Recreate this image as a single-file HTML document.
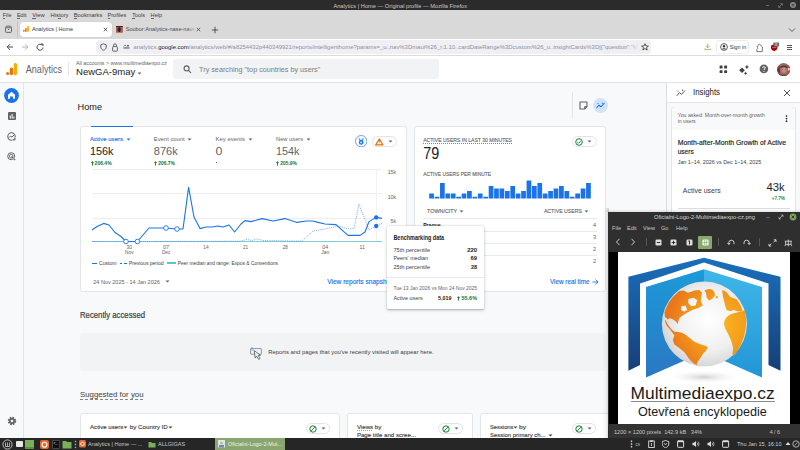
<!DOCTYPE html>
<html><head><meta charset="utf-8"><style>
*{margin:0;padding:0;box-sizing:border-box}
html,body{width:800px;height:450px;overflow:hidden;background:#f8f9fa;font-family:"Liberation Sans",sans-serif}
.t{position:absolute;white-space:nowrap;line-height:1}
text{font-family:"Liberation Sans",sans-serif;white-space:pre}
.r{position:absolute}
</style></head><body>
<div class='r' style='left:0px;top:0px;width:800px;height:9.5px;background:#2b2b2b'></div>
<svg class='r' style='left:0;top:0;overflow:visible' width='1' height='1'><text x='400.2' y='8' font-size='5.7' fill='#c9c9c9' font-weight='400' text-anchor='middle' textLength='133.6' lengthAdjust='spacingAndGlyphs' style=''>Analytics | Home — Original profile — Mozilla Firefox</text></svg>
<div class='r' style='left:766.3px;top:4.8px;width:3px;height:0.7px;background:#6a6a6a'></div>
<svg class='r' style='left:777px;top:2px;' width='7' height='7' viewBox='0 0 7 7'><path d='M1.8 5.2 L5.2 1.8 M3.4 1.6 H5.4 V3.6 M1.6 3.4 V5.4 H3.6' stroke='#7a7a7a' stroke-width='0.8' fill='none'/></svg>
<svg class='r' style='left:789px;top:1px;' width='8' height='8' viewBox='0 0 8 8'><circle cx='4' cy='4' r='3' fill='#8a8a8a'/><circle cx='4' cy='4' r='1.5' fill='#555'/></svg>
<div class='r' style='left:0px;top:9.5px;width:800px;height:29px;background:#d9d9d9'></div>
<svg class='r' style='left:0;top:0;overflow:visible' width='1' height='1'><text x='2.75' y='17' font-size='5.8' fill='#3b3b3b' font-weight='400' text-anchor='start' textLength='8.85' lengthAdjust='spacingAndGlyphs' style=''>File</text></svg>
<svg class='r' style='left:0;top:0;overflow:visible' width='1' height='1'><text x='16.9' y='17' font-size='5.8' fill='#3b3b3b' font-weight='400' text-anchor='start' textLength='9.6' lengthAdjust='spacingAndGlyphs' style=''>Edit</text></svg>
<svg class='r' style='left:0;top:0;overflow:visible' width='1' height='1'><text x='32.25' y='17' font-size='5.8' fill='#3b3b3b' font-weight='400' text-anchor='start' textLength='12.5' lengthAdjust='spacingAndGlyphs' style=''>View</text></svg>
<svg class='r' style='left:0;top:0;overflow:visible' width='1' height='1'><text x='50.6' y='17' font-size='5.8' fill='#3b3b3b' font-weight='400' text-anchor='start' textLength='17.9' lengthAdjust='spacingAndGlyphs' style=''>History</text></svg>
<svg class='r' style='left:0;top:0;overflow:visible' width='1' height='1'><text x='73.75' y='17' font-size='5.8' fill='#3b3b3b' font-weight='400' text-anchor='start' textLength='28.5' lengthAdjust='spacingAndGlyphs' style=''>Bookmarks</text></svg>
<svg class='r' style='left:0;top:0;overflow:visible' width='1' height='1'><text x='107.5' y='17' font-size='5.8' fill='#3b3b3b' font-weight='400' text-anchor='start' textLength='18.75' lengthAdjust='spacingAndGlyphs' style=''>Profiles</text></svg>
<svg class='r' style='left:0;top:0;overflow:visible' width='1' height='1'><text x='132.25' y='17' font-size='5.8' fill='#3b3b3b' font-weight='400' text-anchor='start' textLength='12.75' lengthAdjust='spacingAndGlyphs' style=''>Tools</text></svg>
<svg class='r' style='left:0;top:0;overflow:visible' width='1' height='1'><text x='150.6' y='17' font-size='5.8' fill='#3b3b3b' font-weight='400' text-anchor='start' textLength='11.5' lengthAdjust='spacingAndGlyphs' style=''>Help</text></svg>
<div class='r' style='left:2.9px;top:18px;width:2.6px;height:0.5px;background:#666'></div>
<div class='r' style='left:17px;top:18px;width:2.6px;height:0.5px;background:#666'></div>
<div class='r' style='left:32.4px;top:18px;width:3.3px;height:0.5px;background:#666'></div>
<div class='r' style='left:58.3px;top:18px;width:2.3px;height:0.5px;background:#666'></div>
<div class='r' style='left:73.9px;top:18px;width:3.2px;height:0.5px;background:#666'></div>
<div class='r' style='left:107.7px;top:18px;width:2.8px;height:0.5px;background:#666'></div>
<div class='r' style='left:132.4px;top:18px;width:2.8px;height:0.5px;background:#666'></div>
<div class='r' style='left:150.8px;top:18px;width:3.4px;height:0.5px;background:#666'></div>
<svg class='r' style='left:4px;top:25px;' width='9' height='9' viewBox='0 0 9 9'><path d='M1.5 2.8 C1.5 1.6 2 1.2 3 1.2 H6 C7 1.2 7.5 1.6 7.5 2.8' fill='none' stroke='#5a5a5a' stroke-width='0.9'/><rect x='1.5' y='2.8' width='6' height='4.6' rx='0.9' fill='none' stroke='#5a5a5a' stroke-width='0.9'/><path d='M4 4.5 H5' stroke='#5a5a5a' stroke-width='0.8'/></svg>
<div class='r' style='left:17px;top:20.5px;width:0.6px;height:17.5px;background:#c6c6c6'></div>
<div class='r' style='left:20px;top:22px;width:91.5px;height:14.5px;background:#ffffff;border-radius:3.5px;box-shadow:0 0 1px rgba(0,0,0,.2)'></div>
<svg class='r' style='left:23.2px;top:26px;' width='6' height='6' viewBox='0 0 6 6'><rect x='0.1' y='3.8' width='1.6' height='2.1' rx='.8' fill='#e8710a'/><rect x='2.1' y='2' width='1.6' height='3.9' rx='.7' fill='#e8710a'/><rect x='4.2' y='0' width='1.7' height='5.9' rx='.8' fill='#f9ab00'/></svg>
<svg class='r' style='left:0;top:0;overflow:visible' width='1' height='1'><text x='31.9' y='31' font-size='5.8' fill='#333' font-weight='400' text-anchor='start' textLength='41.2' lengthAdjust='spacingAndGlyphs' style=''>Analytics | Home</text></svg>
<svg class='r' style='left:102.5px;top:26.5px;' width='5' height='5' viewBox='0 0 5 5'><path d='M0.8 0.8 L4.2 4.2 M4.2 0.8 L0.8 4.2' stroke='#333' stroke-width='0.8'/></svg>
<svg class='r' style='left:116.4px;top:25.9px;' width='6.8' height='6.8' viewBox='0 0 6.8 6.8'><rect x='0' y='0' width='6.8' height='6.8' rx='0.6' fill='#c8581c'/><rect x='0' y='0' width='6.8' height='0.9' fill='#3a1a0a'/><ellipse cx='3.2' cy='3.6' rx='1.9' ry='2.3' fill='#1a3c9a'/><path d='M3.2 1.6 V5.8' stroke='#0a0a14' stroke-width='0.9'/></svg>
<svg class='r' style='left:0;top:0;overflow:visible' width='1' height='1'><text x='125.7' y='31' font-size='5.8' fill='#4a4a4a' font-weight='400' text-anchor='start' textLength='71' lengthAdjust='spacingAndGlyphs' style=''>Soubor:Analytics-nase-navs:</text></svg>
<div class='r' style='left:186px;top:21px;width:11px;height:16px;background:linear-gradient(90deg,rgba(217,217,217,0),#d9d9d9)'></div>
<svg class='r' style='left:196.3px;top:26.5px;' width='5' height='5' viewBox='0 0 5 5'><path d='M0.8 0.8 L4.2 4.2 M4.2 0.8 L0.8 4.2' stroke='#444' stroke-width='0.8'/></svg>
<svg class='r' style='left:210.5px;top:25.5px;' width='8' height='8' viewBox='0 0 8 8'><path d='M4 0.8 V7.2 M0.8 4 H7.2' stroke='#333' stroke-width='0.8'/></svg>
<svg class='r' style='left:788px;top:26.5px;' width='8' height='6' viewBox='0 0 8 6'><path d='M1 1.5 L4 4.5 L7 1.5' stroke='#444' stroke-width='0.8' fill='none'/></svg>
<div class='r' style='left:0px;top:38.5px;width:800px;height:17px;background:#ffffff'></div>
<div class='r' style='left:0px;top:55px;width:800px;height:0.8px;background:#dcdcdc'></div>
<svg class='r' style='left:6px;top:43px;' width='8' height='8' viewBox='0 0 8 8'><path d='M7 4 H1.3 M4 1.2 L1.2 4 L4 6.8' stroke='#333' stroke-width='0.9' fill='none'/></svg>
<svg class='r' style='left:21px;top:43px;' width='8' height='8' viewBox='0 0 8 8'><path d='M1 4 H6.7 M4 1.2 L6.8 4 L4 6.8' stroke='#aaa' stroke-width='0.9' fill='none'/></svg>
<svg class='r' style='left:36px;top:43px;' width='8' height='8' viewBox='0 0 8 8'><path d='M6.3 2.3 A3 3 0 1 0 7 4.5' stroke='#333' stroke-width='0.9' fill='none'/><path d='M5 1 L7 1 L7 3' stroke='#333' stroke-width='0.9' fill='none'/></svg>
<div class='r' style='left:96px;top:40.3px;width:555px;height:13.3px;background:#f0f0f4;border-radius:4px'></div>
<svg class='r' style='left:99.5px;top:43px;' width='7' height='8' viewBox='0 0 7 8'><path d='M3.5 0.8 L6.2 1.8 V4 C6.2 5.8 4.8 6.8 3.5 7.3 C2.2 6.8 0.8 5.8 0.8 4 V1.8 Z' stroke='#444' stroke-width='0.8' fill='none'/></svg>
<svg class='r' style='left:111.5px;top:42.5px;' width='6' height='9' viewBox='0 0 6 9'><rect x='0.6' y='3.6' width='4.8' height='4.6' rx='0.8' stroke='#444' stroke-width='0.8' fill='none'/><path d='M1.6 3.6 V2.2 A1.4 1.4 0 0 1 4.4 2.2 V3.6' stroke='#444' stroke-width='0.8' fill='none'/></svg>
<svg class='r' style='left:122.5px;top:44px;' width='7' height='6' viewBox='0 0 7 6'><rect x='0.5' y='3.4' width='6' height='1.1' fill='#555'/><path d='M0.6 2.4 L2.2 1 L3.2 2.4' stroke='#555' stroke-width='0.7' fill='none'/><circle cx='5' cy='1.7' r='0.9' fill='#555'/></svg>
<svg class='r' style='left:96px;top:38px' width='543' height='17'><text x='37.5' y='11' font-size='5.93' fill='#8f8f9d'>analytics.<tspan fill='#15141a'>google.com</tspan>/analytics/web/#/a8254432p440349921/reports/intelligenthome?params=_u..nav%3Dmaui%26_r.1.10..cardDateRange%3Dcustom%26_u..insightCards%3D[{&quot;question&quot;:&quot;M</text></svg>
<div class='r' style='left:627px;top:41px;width:13px;height:12px;background:linear-gradient(90deg,rgba(240,240,244,0),#f0f0f4)'></div>
<svg class='r' style='left:641px;top:43px;' width='8' height='8' viewBox='0 0 8 8'><path d='M4 0.7 L5 3 L7.4 3.1 L5.5 4.6 L6.2 7 L4 5.6 L1.8 7 L2.5 4.6 L0.6 3.1 L3 3 Z' stroke='#333' stroke-width='0.8' fill='none' stroke-linejoin='round'/></svg>
<svg class='r' style='left:704px;top:43px;' width='8' height='8' viewBox='0 0 8 8'><path d='M3.8 0.6 V4.6 M1.9 2.8 L3.8 4.7 L5.7 2.8' stroke='#7fae5a' stroke-width='0.8' fill='none'/><path d='M0.9 5.4 V6.6 H6.7 V5.4' stroke='#7fae5a' stroke-width='0.75' fill='none'/></svg>
<div class='r' style='left:716.3px;top:40.3px;width:33px;height:13.3px;background:#fff;border:0.6px solid #ededed;border-radius:3px'></div>
<svg class='r' style='left:719.5px;top:43px;' width='8' height='8' viewBox='0 0 8 8'><circle cx='4' cy='4' r='3.4' stroke='#333' stroke-width='0.8' fill='none'/><circle cx='4' cy='3.2' r='1.2' fill='#333'/><path d='M1.8 6.3 C2.5 4.8 5.5 4.8 6.2 6.3' fill='#333'/></svg>
<svg class='r' style='left:0;top:0;overflow:visible' width='1' height='1'><text x='729.8' y='49' font-size='5.8' fill='#333' font-weight='400' text-anchor='start' textLength='16.5' lengthAdjust='spacingAndGlyphs' style=''>Sign in</text></svg>
<svg class='r' style='left:754.5px;top:42.5px;' width='9' height='10' viewBox='0 0 9 10'><path d='M4.3 1 L7.3 3.8 V8.6 H1.8 V6.4 L3 5.2 L1.8 4 Z' stroke='#555' stroke-width='0.8' fill='none' stroke-linejoin='round'/></svg>
<svg class='r' style='left:770px;top:41.5px;' width='11' height='10' viewBox='0 0 11 10'><path d='M1 3.4 C2.6 3 3.2 2.6 4.2 2.2 C5.2 2.6 5.8 3 7.4 3.4 V5.8 C7.4 7.6 5.8 8.6 4.2 9.2 C2.6 8.6 1 7.6 1 5.8 Z' fill='#a30000'/><path d='M2.2 5.6 H6.2' stroke='#e8b0b0' stroke-width='0.6'/><rect x='3.3' y='0.4' width='5.8' height='4' rx='0.4' fill='#6b6b6b'/><path d='M5.2 1.3 H6.8 L6 2.3 L6.9 3.4 H5.2' stroke='#eee' stroke-width='0.55' fill='none'/></svg>
<div class='r' style='left:787.3px;top:45.2px;width:5.2px;height:0.65px;background:#555'></div>
<div class='r' style='left:787.3px;top:46.9px;width:5.2px;height:0.65px;background:#555'></div>
<div class='r' style='left:787.3px;top:48.6px;width:5.2px;height:0.65px;background:#555'></div>
<div class='r' style='left:0px;top:55.8px;width:800px;height:26.2px;background:#ffffff'></div>
<div class='r' style='left:0px;top:81.8px;width:800px;height:0.8px;background:#e0e2e5'></div>
<svg class='r' style='left:5px;top:62px;' width='13' height='14' viewBox='0 0 13 14'><circle cx='2.6' cy='11.6' r='1.5' fill='#e8710a'/><rect x='4.8' y='5.6' width='3.3' height='7.6' rx='1.6' fill='#e8710a'/><rect x='8.8' y='0.9' width='3.3' height='12.3' rx='1.6' fill='#f9ab00'/></svg>
<svg class='r' style='left:0;top:0;overflow:visible' width='1' height='1'><text x='25.8' y='73' font-size='10.0' fill='#5f6368' font-weight='400' text-anchor='start' textLength='36.2' lengthAdjust='spacingAndGlyphs' style=''>Analytics</text></svg>
<div class='r' style='left:68.2px;top:62.3px;width:0.6px;height:13.7px;background:#e3e5e8'></div>
<svg class='r' style='left:0;top:0;overflow:visible' width='1' height='1'><text x='76' y='65' font-size='5.5' fill='#5f6368' font-weight='400' text-anchor='start' textLength='90.9' lengthAdjust='spacingAndGlyphs' style=''>All accounts &gt; www.multimediaexpo.cz</text></svg>
<svg class='r' style='left:0;top:0;overflow:visible' width='1' height='1'><text x='76' y='75' font-size='9.6' fill='#202124' font-weight='400' text-anchor='start' textLength='59.3' lengthAdjust='spacingAndGlyphs' style=''>NewGA-9may</text></svg>
<svg class='r' style='left:137px;top:71.5px;' width='5' height='3' viewBox='0 0 5 3'><path d='M0.6 0.5 L2.5 2.5 L4.4 0.5 Z' fill='#5f6368'/></svg>
<div class='r' style='left:172.5px;top:58.9px;width:266.5px;height:20.2px;background:#f1f3f4;border-radius:3px'></div>
<svg class='r' style='left:182.5px;top:65px;' width='9' height='9' viewBox='0 0 9 9'><circle cx='3.6' cy='3.4' r='2.5' stroke='#5f6368' stroke-width='1.1' fill='none'/><path d='M5.4 5.3 L8 7.9' stroke='#5f6368' stroke-width='1.2'/></svg>
<svg class='r' style='left:0;top:0;overflow:visible' width='1' height='1'><text x='199.1' y='72' font-size='7.5' fill='#7a7e83' font-weight='400' text-anchor='start' textLength='121.2' lengthAdjust='spacingAndGlyphs' style=''>Try searching "top countries by users"</text></svg>
<svg class='r' style='left:718.5px;top:64.5px;' width='10' height='9' viewBox='0 0 10 9'><rect x='0.6' y='0.6' width='2.9' height='2.9' rx='0.5' fill='#3c4043'/><rect x='5.2' y='0.6' width='2.9' height='2.9' rx='0.5' fill='#3c4043'/><rect x='0.6' y='5.2' width='2.9' height='2.9' rx='0.5' fill='#3c4043'/><rect x='5.2' y='5.2' width='2.9' height='2.9' rx='0.5' fill='#3c4043'/></svg>
<svg class='r' style='left:737.5px;top:64px;' width='12' height='11' viewBox='0 0 12 11'><path d='M4 3.4 L6.8 6.2 L4 9 L1.2 6.2 Z' fill='#3c4043'/><path d='M8.9 0.8 L9.6 2.3 L11 3 L9.6 3.7 L8.9 5.2 L8.2 3.7 L6.8 3 L8.2 2.3 Z' fill='#3c4043'/><path d='M7.6 7.6 L8.2 8.7 L9.3 9.3 L8.2 9.9 L7.6 11 L7 9.9 L5.9 9.3 L7 8.7 Z' fill='#3c4043'/></svg>
<svg class='r' style='left:758.5px;top:64px;' width='10' height='10' viewBox='0 0 10 10'><circle cx='4.9' cy='4.9' r='4.3' fill='#5f6368'/><path d='M3.5 3.8 C3.5 2.3 6.3 2.3 6.3 3.8 C6.3 4.9 4.9 4.9 4.9 6' stroke='#fff' stroke-width='0.95' fill='none'/><circle cx='4.9' cy='7.4' r='0.55' fill='#fff'/></svg>
<svg class='r' style='left:776.5px;top:62.7px;' width='13.5' height='13.5' viewBox='0 0 13.5 13.5'><defs><clipPath id='av'><circle cx='6.6' cy='6.6' r='6.5'/></clipPath><radialGradient id='avf' cx='0.5' cy='0.45' r='0.5'><stop offset='0' stop-color='#d9a690'/><stop offset='1' stop-color='#a86b55'/></radialGradient></defs><g clip-path='url(#av)'><rect width='14' height='14' fill='#8a6e6a'/><rect x='0' y='3' width='3.2' height='11' fill='#b92a2e'/><rect x='1' y='6' width='1.6' height='3' fill='#2a3f7a'/><rect x='10.6' y='2' width='3.4' height='12' fill='#c04040'/><rect x='11' y='5' width='1.6' height='2.5' fill='#e6e6e6'/><ellipse cx='6.9' cy='7' rx='3.7' ry='4.5' fill='url(#avf)'/><path d='M3.2 4.6 C3.4 1.8 10.4 1.6 10.6 4.6 L10 5.2 C8.6 3.8 5 3.8 3.8 5.2 Z' fill='#4a3a32'/><rect x='0' y='11.6' width='14' height='3' fill='#5a4a48'/><rect x='5.2' y='6.4' width='1' height='0.6' fill='#5a3a30'/><rect x='7.8' y='6.4' width='1' height='0.6' fill='#5a3a30'/></g></svg>
<div class='r' style='left:0px;top:82.6px;width:23px;height:355.4px;background:#f8f9fa'></div>
<div class='r' style='left:23px;top:82.6px;width:0.8px;height:355.4px;background:#e3e5e8'></div>
<svg class='r' style='left:4px;top:88.2px;' width='15' height='15' viewBox='0 0 15 15'><circle cx='7.5' cy='7.5' r='7.4' fill='#1a73e8'/><path d='M7.5 3.8 L11 6.7 V10.8 H9 V8.4 H6 V10.8 H4 V6.7 Z' fill='#fff'/></svg>
<svg class='r' style='left:7.5px;top:112px;' width='8' height='8' viewBox='0 0 8 8'><rect x='0' y='0' width='8' height='8' rx='1' fill='#5f6368'/><rect x='1.8' y='3.6' width='1' height='3' fill='#fff'/><rect x='3.6' y='2' width='1' height='4.6' fill='#fff'/><rect x='5.4' y='4.6' width='1' height='2' fill='#fff'/></svg>
<svg class='r' style='left:7px;top:131.5px;' width='9' height='9' viewBox='0 0 9 9'><circle cx='4.5' cy='4.5' r='3.7' stroke='#5f6368' stroke-width='1.1' fill='none'/><path d='M2 5.6 L3.6 4 L5 5 L7 3' stroke='#5f6368' stroke-width='1' fill='none'/><path d='M5.2 8.4 H8.4 V5.5' stroke='#f8f9fa' stroke-width='1.5' fill='none'/><path d='M6 8 H8 V6' stroke='#5f6368' stroke-width='0.9' fill='none'/></svg>
<svg class='r' style='left:7px;top:151.5px;' width='9' height='9' viewBox='0 0 9 9'><circle cx='4.2' cy='4.2' r='3.5' stroke='#5f6368' stroke-width='1' fill='none'/><circle cx='4.2' cy='4.2' r='1.8' stroke='#5f6368' stroke-width='0.9' fill='none'/><path d='M4.5 4.5 L8.2 8.2' stroke='#5f6368' stroke-width='1.1'/><path d='M5.2 8.3 L8.3 5.2' stroke='#f8f9fa' stroke-width='0.6'/></svg>
<svg class='r' style='left:6.7px;top:415.7px;' width='10' height='10' viewBox='0 0 10 10'><circle cx='5' cy='5' r='3.2' fill='none' stroke='#5f6368' stroke-width='2' stroke-dasharray='1.55 0.96'/><circle cx='5' cy='5' r='3' fill='#5f6368'/><circle cx='5' cy='5' r='1.3' fill='#f8f9fa'/></svg>
<svg class='r' style='left:0;top:0;overflow:visible' width='1' height='1'><text x='77.5' y='110' font-size='9.9' fill='#202124' font-weight='400' text-anchor='start' textLength='24.5' lengthAdjust='spacingAndGlyphs' style=''>Home</text></svg>
<div class='r' style='left:572.3px;top:92px;width:0.6px;height:26px;background:#e3e5e8'></div>
<svg class='r' style='left:578.5px;top:100.5px;' width='9' height='9' viewBox='0 0 9 9'><path d='M1 1 H8 V5.6 L5.6 8 H1 Z' stroke='#5f6368' stroke-width='1.1' fill='none' stroke-linejoin='round'/><path d='M8 5.6 H5.6 V8' stroke='#5f6368' stroke-width='0.9' fill='none'/></svg>
<svg class='r' style='left:592.5px;top:97.5px;' width='15' height='15' viewBox='0 0 15 15'><circle cx='7.5' cy='7.5' r='7.5' fill='#d3e3fd'/><path d='M3.5 10 L6 7.2 L8 8.8 L11.5 5' stroke='#1a73e8' stroke-width='1.1' fill='none'/><circle cx='5' cy='5.5' r='0.6' fill='#1a73e8'/><circle cx='9.3' cy='5.2' r='0.6' fill='#1a73e8'/></svg>
<div class='r' style='left:666.5px;top:82.6px;width:133.5px;height:355.4px;background:#f8f9fa'></div>
<div class='r' style='left:666.3px;top:82.6px;width:0.7px;height:355.4px;background:#dadce0'></div>
<div class='r' style='left:667px;top:82.6px;width:133px;height:19.6px;background:#ffffff'></div>
<div class='r' style='left:667px;top:102px;width:133px;height:0.7px;background:#e3e5e8'></div>
<svg class='r' style='left:675.5px;top:89px;' width='10' height='8' viewBox='0 0 10 8'><path d='M0.8 6.8 L3.5 3.6 L5.5 5.4 L9 1.5' stroke='#3c4043' stroke-width='0.9' fill='none'/><circle cx='2' cy='2' r='0.6' fill='#3c4043'/><circle cx='6.6' cy='1.2' r='0.6' fill='#3c4043'/></svg>
<svg class='r' style='left:0;top:0;overflow:visible' width='1' height='1'><text x='693' y='95' font-size='8.6' fill='#202124' font-weight='400' text-anchor='start' textLength='27' lengthAdjust='spacingAndGlyphs' style=''>Insights</text></svg>
<svg class='r' style='left:782.5px;top:88.5px;' width='8' height='8' viewBox='0 0 8 8'><path d='M1 1 L7 7 M7 1 L1 7' stroke='#3c4043' stroke-width='0.9'/></svg>
<div class='r' style='left:671px;top:106.5px;width:125px;height:120px;background:#ffffff;border:0.6px solid #e4e5e8;border-radius:2.5px;overflow:hidden'></div>
<div class='r' style='left:671.6px;top:107.1px;width:123.8px;height:22.6px;background:#f8f9fa;border-radius:4px 4px 0 0'></div>
<svg class='r' style='left:0;top:0;overflow:visible' width='1' height='1'><text x='677.7' y='117' font-size='5.3' fill='#5f6368' font-weight='400' text-anchor='start' textLength='87' lengthAdjust='spacingAndGlyphs' style=''>You asked: Month-over-month growth</text></svg>
<svg class='r' style='left:0;top:0;overflow:visible' width='1' height='1'><text x='677.7' y='123' font-size='5.3' fill='#5f6368' font-weight='400' text-anchor='start' textLength='18' lengthAdjust='spacingAndGlyphs' style=''>in users</text></svg>
<svg class='r' style='left:785px;top:114.5px;' width='3' height='8' viewBox='0 0 3 8'><circle cx='1.5' cy='1' r='0.85' fill='#202124'/><circle cx='1.5' cy='3.6' r='0.85' fill='#202124'/><circle cx='1.5' cy='6.2' r='0.85' fill='#202124'/></svg>
<svg class='r' style='left:0;top:0;overflow:visible' width='1' height='1'><text x='677.7' y='145' font-size='8.0' fill='#202124' font-weight='400' text-anchor='start' textLength='108.3' lengthAdjust='spacingAndGlyphs' stroke='#202124' stroke-width='0.176' style=''>Month-after-Month Growth of Active</text></svg>
<svg class='r' style='left:0;top:0;overflow:visible' width='1' height='1'><text x='677.7' y='154' font-size='8.0' fill='#202124' font-weight='400' text-anchor='start' textLength='16' lengthAdjust='spacingAndGlyphs' stroke='#202124' stroke-width='0.176' style=''>users</text></svg>
<svg class='r' style='left:0;top:0;overflow:visible' width='1' height='1'><text x='677.7' y='164' font-size='5.9' fill='#3c4043' font-weight='400' text-anchor='start' textLength='83.5' lengthAdjust='spacingAndGlyphs' style=''>Jan 1–14, 2026 vs Dec 1–14, 2025</text></svg>
<svg class='r' style='left:0;top:0;overflow:visible' width='1' height='1'><text x='682.8' y='193' font-size='7.7' fill='#3c4043' font-weight='400' text-anchor='start' textLength='38' lengthAdjust='spacingAndGlyphs' style=''>Active users</text></svg>
<svg class='r' style='left:0;top:0;overflow:visible' width='1' height='1'><text x='784.75' y='191' font-size='11.0' fill='#202124' font-weight='400' text-anchor='end' textLength='18.25' lengthAdjust='spacingAndGlyphs' style=''>43k</text></svg>
<svg class='r' style='left:0;top:0;overflow:visible' width='1' height='1'><text x='784.75' y='200' font-size='5.0' fill='#137333' font-weight='400' text-anchor='end' textLength='13' lengthAdjust='spacingAndGlyphs' stroke='#137333' stroke-width='0.110' style=''>+7.7%</text></svg>
<div class='r' style='left:677.7px;top:208px;width:112px;height:0.7px;background:#dadce0'></div>
<div class='r' style='left:80px;top:125.5px;width:326.8px;height:166.5px;background:#fff;border:0.6px solid #e4e5e8;border-radius:2.5px'></div>
<div class='r' style='left:91px;top:125.5px;width:41.5px;height:1.8px;background:#1a73e8'></div>
<svg class='r' style='left:0;top:0;overflow:visible' width='1' height='1'><text x='90' y='141' font-size='6.2' fill='#1a73e8' font-weight='400' text-anchor='start' textLength='33.1' lengthAdjust='spacingAndGlyphs' stroke='#1a73e8' stroke-width='0.136' style=''>Active users</text></svg>
<svg class='r' style='left:126.3px;top:137.8px;' width='5' height='3' viewBox='0 0 5 3'><path d='M0.5 0.5 L2.5 2.6 L4.5 0.5 Z' fill='#1a73e8'/></svg>
<svg class='r' style='left:0;top:0;overflow:visible' width='1' height='1'><text x='153.75' y='141' font-size='6.2' fill='#5f6368' font-weight='400' text-anchor='start' textLength='31' lengthAdjust='spacingAndGlyphs' style=''>Event count</text></svg>
<svg class='r' style='left:186.8px;top:137.8px;' width='5' height='3' viewBox='0 0 5 3'><path d='M0.5 0.5 L2.5 2.6 L4.5 0.5 Z' fill='#5f6368'/></svg>
<svg class='r' style='left:0;top:0;overflow:visible' width='1' height='1'><text x='215.6' y='141' font-size='6.2' fill='#5f6368' font-weight='400' text-anchor='start' textLength='29.4' lengthAdjust='spacingAndGlyphs' style=''>Key events</text></svg>
<svg class='r' style='left:248.3px;top:137.8px;' width='5' height='3' viewBox='0 0 5 3'><path d='M0.5 0.5 L2.5 2.6 L4.5 0.5 Z' fill='#5f6368'/></svg>
<svg class='r' style='left:0;top:0;overflow:visible' width='1' height='1'><text x='276' y='141' font-size='6.2' fill='#5f6368' font-weight='400' text-anchor='start' textLength='27.1' lengthAdjust='spacingAndGlyphs' style=''>New users</text></svg>
<svg class='r' style='left:306.4px;top:137.8px;' width='5' height='3' viewBox='0 0 5 3'><path d='M0.5 0.5 L2.5 2.6 L4.5 0.5 Z' fill='#5f6368'/></svg>
<svg class='r' style='left:0;top:0;overflow:visible' width='1' height='1'><text x='90' y='155' font-size='11.8' fill='#202124' font-weight='400' text-anchor='start' textLength='23.5' lengthAdjust='spacingAndGlyphs' style=''>156k</text></svg>
<svg class='r' style='left:0;top:0;overflow:visible' width='1' height='1'><text x='153.75' y='155' font-size='11.8' fill='#5f6368' font-weight='400' text-anchor='start' textLength='24' lengthAdjust='spacingAndGlyphs' style=''>876k</text></svg>
<svg class='r' style='left:0;top:0;overflow:visible' width='1' height='1'><text x='215.6' y='155' font-size='11.8' fill='#5f6368' font-weight='400' text-anchor='start' textLength='6.9' lengthAdjust='spacingAndGlyphs' style=''>0</text></svg>
<svg class='r' style='left:0;top:0;overflow:visible' width='1' height='1'><text x='276' y='155' font-size='11.8' fill='#5f6368' font-weight='400' text-anchor='start' textLength='23.4' lengthAdjust='spacingAndGlyphs' style=''>154k</text></svg>
<svg class='r' style='left:90.6px;top:160.6px;' width='3' height='5' viewBox='0 0 3 5'><path d='M1.5 4.6 V1 M0.3 2.2 L1.5 0.6 L2.7 2.2' stroke='#137333' stroke-width='0.9' fill='none'/></svg>
<svg class='r' style='left:0;top:0;overflow:visible' width='1' height='1'><text x='94.6' y='165' font-size='5.4' fill='#137333' font-weight='700' text-anchor='start' textLength='17' lengthAdjust='spacingAndGlyphs' style=''>206.4%</text></svg>
<svg class='r' style='left:154.3px;top:160.6px;' width='3' height='5' viewBox='0 0 3 5'><path d='M1.5 4.6 V1 M0.3 2.2 L1.5 0.6 L2.7 2.2' stroke='#137333' stroke-width='0.9' fill='none'/></svg>
<svg class='r' style='left:0;top:0;overflow:visible' width='1' height='1'><text x='158.3' y='165' font-size='5.4' fill='#137333' font-weight='700' text-anchor='start' textLength='16.7' lengthAdjust='spacingAndGlyphs' style=''>206.7%</text></svg>
<svg class='r' style='left:276.2px;top:160.6px;' width='3' height='5' viewBox='0 0 3 5'><path d='M1.5 4.6 V1 M0.3 2.2 L1.5 0.6 L2.7 2.2' stroke='#137333' stroke-width='0.9' fill='none'/></svg>
<svg class='r' style='left:0;top:0;overflow:visible' width='1' height='1'><text x='280.2' y='165' font-size='5.4' fill='#137333' font-weight='700' text-anchor='start' textLength='16.7' lengthAdjust='spacingAndGlyphs' style=''>205.9%</text></svg>
<div class='r' style='left:215.8px;top:161.6px;width:1.2px;height:0.8px;background:#5f6368'></div>
<svg class='r' style='left:354.7px;top:134.7px;' width='12.5' height='12.5' viewBox='0 0 12.5 12.5'><circle cx='6.2' cy='6.2' r='5.7' fill='#fff' stroke='#1a73e8' stroke-width='0.65'/><path d='M3.4 3.6 H5.4 L4.6 5 Z M6.9 3.6 H9 L7.8 5 Z' fill='#1a73e8'/><circle cx='6.2' cy='7.4' r='2.3' fill='#1a73e8'/><circle cx='6.2' cy='7.4' r='0.9' fill='#fff'/><path d='M4.2 5.2 L8.2 5.2' stroke='#1a73e8' stroke-width='0.9'/></svg>
<div class='r' style='left:372px;top:135.5px;width:24.5px;height:11.5px;background:#fff;border:0.6px solid #e2e3e5;border-radius:6px'></div>
<svg class='r' style='left:374.5px;top:137.5px;' width='9' height='8' viewBox='0 0 9 8'><path d='M4.3 0.9 L7.9 6.9 H0.7 Z' fill='none' stroke='#e37400' stroke-width='1.1' stroke-linejoin='round'/><path d='M4.3 3 V4.9' stroke='#e37400' stroke-width='0.9'/><circle cx='4.3' cy='5.9' r='0.45' fill='#e37400'/></svg>
<svg class='r' style='left:387.5px;top:140.3px;' width='5' height='3' viewBox='0 0 5 3'><path d='M0.5 0.5 L2.5 2.6 L4.5 0.5 Z' fill='#5f6368'/></svg>
<div class='r' style='left:92px;top:169px;width:290px;height:0.6px;background:#eceef0'></div>
<div class='r' style='left:92px;top:193.4px;width:290px;height:0.6px;background:#eceef0'></div>
<div class='r' style='left:92px;top:218.4px;width:290px;height:0.6px;background:#eceef0'></div>
<div class='r' style='left:376.4px;top:169px;width:0.6px;height:73px;background:#f0f1f3'></div>
<svg class='r' style='left:0;top:0;overflow:visible' width='1' height='1'><text x='396' y='174.2' font-size='5.2' fill='#5f6368' font-weight='400' text-anchor='end' style=''>15k</text></svg>
<svg class='r' style='left:0;top:0;overflow:visible' width='1' height='1'><text x='396' y='198.6' font-size='5.2' fill='#5f6368' font-weight='400' text-anchor='end' style=''>10k</text></svg>
<svg class='r' style='left:0;top:0;overflow:visible' width='1' height='1'><text x='396' y='223.4' font-size='5.2' fill='#5f6368' font-weight='400' text-anchor='end' style=''>5k</text></svg>
<svg class='r' style='left:0;top:0' width='800' height='450' viewBox='0 0 800 450'><polyline points='92,241.5 382,241.5' stroke='#7ccfd8' stroke-width='1' fill='none'/><polyline points='92,241.5 150,241.5 240,241.2 247,239.5 252,240.5 257,238.8 263,240.5 302,241.2 313,231 325,229 338,226 349,229 354,228.6 359,204 369,230 376,226 382,223' stroke='#4a8af4' stroke-width='0.7' fill='none' stroke-dasharray='1.1 1.1'/><polyline points='92,230 97,226.5 103.6,223.4 109,225 115,232.5 121,236.5 126,241.5 137.4,241.5 149,228 166,228 177,229 183,229 188.6,187.4 194,217 200,228.6 206,227 212,227 218,226 223,227 229,225 234.6,232 241,224 245,220.6 251,221.6 262,218.6 273,221 285,218.6 297,222.4 306,221 313,221 318,222.4 325,224 336,224.6 348,235.4 360,235.4 365,232 369,221.6 376,217.4 382,218.4' stroke='#1a73e8' stroke-width='1.1' fill='none' stroke-linejoin='round'/><circle cx='126' cy='241.5' r='2.3' fill='#fff' stroke='#1a73e8' stroke-width='0.9'/><circle cx='137.4' cy='241.5' r='2.3' fill='#fff' stroke='#1a73e8' stroke-width='0.9'/><circle cx='166' cy='228' r='2.3' fill='#fff' stroke='#1a73e8' stroke-width='0.9'/><circle cx='177' cy='229' r='2.3' fill='#fff' stroke='#1a73e8' stroke-width='0.9'/><circle cx='376.2' cy='217.4' r='2.2' fill='#1a73e8'/><circle cx='376.2' cy='226' r='2.2' fill='#1a73e8'/></svg>
<svg class='r' style='left:0;top:0;overflow:visible' width='1' height='1'><text x='129.25' y='249' font-size='5.4' fill='#5f6368' font-weight='400' text-anchor='middle' textLength='5.5' lengthAdjust='spacingAndGlyphs' style=''>30</text></svg>
<svg class='r' style='left:0;top:0;overflow:visible' width='1' height='1'><text x='129.25' y='254' font-size='5.4' fill='#5f6368' font-weight='400' text-anchor='middle' textLength='8.8' lengthAdjust='spacingAndGlyphs' style=''>Nov</text></svg>
<svg class='r' style='left:0;top:0;overflow:visible' width='1' height='1'><text x='166.1' y='249' font-size='5.4' fill='#5f6368' font-weight='400' text-anchor='middle' textLength='6.2' lengthAdjust='spacingAndGlyphs' style=''>07</text></svg>
<svg class='r' style='left:0;top:0;overflow:visible' width='1' height='1'><text x='166.1' y='254' font-size='5.4' fill='#5f6368' font-weight='400' text-anchor='middle' textLength='8.2' lengthAdjust='spacingAndGlyphs' style=''>Dec</text></svg>
<svg class='r' style='left:0;top:0;overflow:visible' width='1' height='1'><text x='205.9' y='249' font-size='5.4' fill='#5f6368' font-weight='400' text-anchor='middle' textLength='5.3' lengthAdjust='spacingAndGlyphs' style=''>14</text></svg>
<svg class='r' style='left:0;top:0;overflow:visible' width='1' height='1'><text x='245.6' y='249' font-size='5.4' fill='#5f6368' font-weight='400' text-anchor='middle' textLength='5.2' lengthAdjust='spacingAndGlyphs' style=''>21</text></svg>
<svg class='r' style='left:0;top:0;overflow:visible' width='1' height='1'><text x='285.25' y='249' font-size='5.4' fill='#5f6368' font-weight='400' text-anchor='middle' textLength='5.1' lengthAdjust='spacingAndGlyphs' style=''>28</text></svg>
<svg class='r' style='left:0;top:0;overflow:visible' width='1' height='1'><text x='325.2' y='249' font-size='5.4' fill='#5f6368' font-weight='400' text-anchor='middle' textLength='6' lengthAdjust='spacingAndGlyphs' style=''>04</text></svg>
<svg class='r' style='left:0;top:0;overflow:visible' width='1' height='1'><text x='325.2' y='254' font-size='5.4' fill='#5f6368' font-weight='400' text-anchor='middle' textLength='8' lengthAdjust='spacingAndGlyphs' style=''>Jan</text></svg>
<svg class='r' style='left:0;top:0;overflow:visible' width='1' height='1'><text x='362.1' y='249' font-size='5.4' fill='#5f6368' font-weight='400' text-anchor='middle' textLength='5.2' lengthAdjust='spacingAndGlyphs' style=''>11</text></svg>
<div class='r' style='left:92px;top:262.6px;width:5.4px;height:1.1px;background:#1a73e8'></div>
<svg class='r' style='left:0;top:0;overflow:visible' width='1' height='1'><text x='99' y='265' font-size='5.6' fill='#3c4043' font-weight='400' text-anchor='start' textLength='17.5' lengthAdjust='spacingAndGlyphs' style=''>Custom</text></svg>
<div class='r' style='left:119.9px;top:262.6px;width:2.1px;height:1.1px;background:#1a73e8'></div>
<div class='r' style='left:124.3px;top:262.6px;width:2.4px;height:1.1px;background:#1a73e8'></div>
<svg class='r' style='left:0;top:0;overflow:visible' width='1' height='1'><text x='129' y='265' font-size='5.6' fill='#3c4043' font-weight='400' text-anchor='start' textLength='34.6' lengthAdjust='spacingAndGlyphs' style=''>Previous period</text></svg>
<div class='r' style='left:167.4px;top:261.9px;width:8.4px;height:2.5px;background:#b6e3ea;border-top:0.6px solid #5ec4d4;border-bottom:0.6px solid #5ec4d4'></div>
<svg class='r' style='left:0;top:0;overflow:visible' width='1' height='1'><text x='177.75' y='265' font-size='5.6' fill='#3c4043' font-weight='400' text-anchor='start' textLength='100.25' lengthAdjust='spacingAndGlyphs' style=''>Peer median and range: Expos &amp; Conventions</text></svg>
<svg class='r' style='left:0;top:0;overflow:visible' width='1' height='1'><text x='93.25' y='284' font-size='6.2' fill='#5f6368' font-weight='400' text-anchor='start' textLength='66.6' lengthAdjust='spacingAndGlyphs' style=''>24 Nov 2025 - 14 Jan 2026</text></svg>
<svg class='r' style='left:164.6px;top:280.3px;' width='5' height='3' viewBox='0 0 5 3'><path d='M0.5 0.5 L2.5 2.6 L4.5 0.5 Z' fill='#5f6368'/></svg>
<svg class='r' style='left:0;top:0;overflow:visible' width='1' height='1'><text x='327.2' y='284' font-size='6.4' fill='#1a73e8' font-weight='400' text-anchor='start' textLength='65' lengthAdjust='spacingAndGlyphs' stroke='#1a73e8' stroke-width='0.141' style=''>View reports snapshot</text></svg>
<div class='r' style='left:413.8px;top:125.5px;width:192.4px;height:166.5px;background:#fff;border:0.6px solid #e4e5e8;border-radius:2.5px'></div>
<svg class='r' style='left:0;top:0;overflow:visible' width='1' height='1'><text x='423.25' y='142' font-size='5.8' fill='#5f6368' font-weight='400' text-anchor='start' textLength='88.75' lengthAdjust='spacingAndGlyphs' stroke='#5f6368' stroke-width='0.128' style=''>ACTIVE USERS IN LAST 30 MINUTES</text></svg>
<div class='r' style='left:423.25px;top:143.2px;width:88.75px;height:0.6px;background:repeating-linear-gradient(90deg,#80868b 0 1px,transparent 1px 2px)'></div>
<svg class='r' style='left:0;top:0;overflow:visible' width='1' height='1'><text x='423.25' y='159' font-size='15.8' fill='#202124' font-weight='400' text-anchor='start' textLength='16' lengthAdjust='spacingAndGlyphs' style=''>79</text></svg>
<div class='r' style='left:571.5px;top:135.5px;width:25px;height:11.5px;background:#fff;border:0.6px solid #e2e3e5;border-radius:6px'></div>
<svg class='r' style='left:575px;top:137.5px;' width='8' height='8' viewBox='0 0 8 8'><circle cx='4' cy='4' r='3.3' fill='none' stroke='#188038' stroke-width='1'/><path d='M2.4 4.1 L3.6 5.3 L5.7 3' stroke='#188038' stroke-width='0.9' fill='none'/></svg>
<svg class='r' style='left:586.5px;top:140.3px;' width='5' height='3' viewBox='0 0 5 3'><path d='M0.5 0.5 L2.5 2.6 L4.5 0.5 Z' fill='#5f6368'/></svg>
<svg class='r' style='left:0;top:0;overflow:visible' width='1' height='1'><text x='423.25' y='176' font-size='5.8' fill='#5f6368' font-weight='400' text-anchor='start' textLength='67.9' lengthAdjust='spacingAndGlyphs' stroke='#5f6368' stroke-width='0.128' style=''>ACTIVE USERS PER MINUTE</text></svg>
<svg class='r' style='left:0;top:0' width='800' height='450' viewBox='0 0 800 450'><rect x='429.20' y='193.5' width='4.71' height='5' fill='#1a73e8'/><rect x='434.61' y='196.75' width='4.71' height='1.75' fill='#1a73e8'/><rect x='440.02' y='183.0' width='4.71' height='15.5' fill='#1a73e8'/><rect x='445.43' y='193.5' width='4.71' height='5' fill='#1a73e8'/><rect x='450.84' y='193.5' width='4.71' height='5' fill='#1a73e8'/><rect x='456.25' y='196.75' width='4.71' height='1.75' fill='#1a73e8'/><rect x='461.66' y='193.5' width='4.71' height='5' fill='#1a73e8'/><rect x='467.07' y='191.0' width='4.71' height='7.5' fill='#1a73e8'/><rect x='472.48' y='196.75' width='4.71' height='1.75' fill='#1a73e8'/><rect x='477.89' y='193.5' width='4.71' height='5' fill='#1a73e8'/><rect x='483.30' y='196.75' width='4.71' height='1.75' fill='#1a73e8'/><rect x='488.71' y='186.0' width='4.71' height='12.5' fill='#1a73e8'/><rect x='494.12' y='188.5' width='4.71' height='10' fill='#1a73e8'/><rect x='499.53' y='188.5' width='4.71' height='10' fill='#1a73e8'/><rect x='504.94' y='191.0' width='4.71' height='7.5' fill='#1a73e8'/><rect x='510.35' y='186.0' width='4.71' height='12.5' fill='#1a73e8'/><rect x='515.76' y='193.5' width='4.71' height='5' fill='#1a73e8'/><rect x='521.17' y='191.0' width='4.71' height='7.5' fill='#1a73e8'/><rect x='526.58' y='180.5' width='4.71' height='18' fill='#1a73e8'/><rect x='531.99' y='186.0' width='4.71' height='12.5' fill='#1a73e8'/><rect x='537.40' y='183.0' width='4.71' height='15.5' fill='#1a73e8'/><rect x='542.81' y='193.5' width='4.71' height='5' fill='#1a73e8'/><rect x='548.22' y='191.0' width='4.71' height='7.5' fill='#1a73e8'/><rect x='553.63' y='188.5' width='4.71' height='10' fill='#1a73e8'/><rect x='559.04' y='186.0' width='4.71' height='12.5' fill='#1a73e8'/><rect x='564.45' y='191.0' width='4.71' height='7.5' fill='#1a73e8'/><rect x='569.86' y='196.75' width='4.71' height='1.75' fill='#1a73e8'/><rect x='575.27' y='193.5' width='4.71' height='5' fill='#1a73e8'/><rect x='580.68' y='188.5' width='4.71' height='10' fill='#1a73e8'/><rect x='586.09' y='183.0' width='4.71' height='15.5' fill='#1a73e8'/></svg>
<svg class='r' style='left:0;top:0;overflow:visible' width='1' height='1'><text x='427' y='213' font-size='5.8' fill='#5f6368' font-weight='400' text-anchor='start' textLength='30.2' lengthAdjust='spacingAndGlyphs' stroke='#5f6368' stroke-width='0.128' style=''>TOWN/CITY</text></svg>
<svg class='r' style='left:459.2px;top:210px;' width='5' height='3' viewBox='0 0 5 3'><path d='M0.5 0.5 L2.5 2.6 L4.5 0.5 Z' fill='#5f6368'/></svg>
<svg class='r' style='left:0;top:0;overflow:visible' width='1' height='1'><text x='543.9' y='213' font-size='5.8' fill='#5f6368' font-weight='400' text-anchor='start' textLength='38' lengthAdjust='spacingAndGlyphs' stroke='#5f6368' stroke-width='0.128' style=''>ACTIVE USERS</text></svg>
<svg class='r' style='left:584px;top:210px;' width='5' height='3' viewBox='0 0 5 3'><path d='M0.5 0.5 L2.5 2.6 L4.5 0.5 Z' fill='#5f6368'/></svg>
<div class='r' style='left:423px;top:218.3px;width:173.5px;height:0.6px;background:#e8eaed'></div>
<div class='r' style='left:423px;top:230.9px;width:173.5px;height:0.6px;background:#e8eaed'></div>
<div class='r' style='left:423px;top:243.2px;width:173.5px;height:0.6px;background:#e8eaed'></div>
<div class='r' style='left:423px;top:255px;width:173.5px;height:0.6px;background:#e8eaed'></div>
<svg class='r' style='left:0;top:0;overflow:visible' width='1' height='1'><text x='423.2' y='227' font-size='5.6' fill='#202124' font-weight='700' text-anchor='start' textLength='17.4' lengthAdjust='spacingAndGlyphs' style=''>Prague</text></svg>
<svg class='r' style='left:0;top:0;overflow:visible' width='1' height='1'><text x='596' y='227' font-size='5.6' fill='#5f6368' font-weight='400' text-anchor='end' style=''>4</text></svg>
<svg class='r' style='left:0;top:0;overflow:visible' width='1' height='1'><text x='596' y='239' font-size='5.6' fill='#5f6368' font-weight='400' text-anchor='end' style=''>3</text></svg>
<svg class='r' style='left:0;top:0;overflow:visible' width='1' height='1'><text x='596' y='251' font-size='5.6' fill='#5f6368' font-weight='400' text-anchor='end' style=''>2</text></svg>
<svg class='r' style='left:0;top:0;overflow:visible' width='1' height='1'><text x='596' y='263' font-size='5.6' fill='#5f6368' font-weight='400' text-anchor='end' style=''>2</text></svg>
<svg class='r' style='left:0;top:0;overflow:visible' width='1' height='1'><text x='550' y='284' font-size='6.4' fill='#1a73e8' font-weight='400' text-anchor='start' textLength='39.5' lengthAdjust='spacingAndGlyphs' stroke='#1a73e8' stroke-width='0.141' style=''>View real time</text></svg>
<svg class='r' style='left:592px;top:279px;' width='7' height='6' viewBox='0 0 7 6'><path d='M0.5 3 H6 M3.5 0.6 L6 3 L3.5 5.4' stroke='#1a73e8' stroke-width='0.9' fill='none'/></svg>
<div class='r' style='left:386.7px;top:226.3px;width:97.5px;height:82.7px;background:rgba(255,255,255,0.96);border-radius:2px;box-shadow:0 0.5px 1.5px rgba(60,64,67,.3),0 1px 3px 1px rgba(60,64,67,.12)'></div>
<svg class='r' style='left:0;top:0;overflow:visible' width='1' height='1'><text x='393.4' y='240' font-size='6.5' fill='#202124' font-weight='700' text-anchor='start' textLength='50.7' lengthAdjust='spacingAndGlyphs' style=''>Benchmarking data</text></svg>
<svg class='r' style='left:0;top:0;overflow:visible' width='1' height='1'><text x='393.4' y='252' font-size='6.0' fill='#3c4043' font-weight='400' text-anchor='start' textLength='36.8' lengthAdjust='spacingAndGlyphs' style=''>75th percentile</text></svg>
<svg class='r' style='left:0;top:0;overflow:visible' width='1' height='1'><text x='477' y='252' font-size='6.0' fill='#202124' font-weight='700' text-anchor='end' textLength='9.8' lengthAdjust='spacingAndGlyphs' style=''>220</text></svg>
<svg class='r' style='left:0;top:0;overflow:visible' width='1' height='1'><text x='393.4' y='260' font-size='6.0' fill='#3c4043' font-weight='400' text-anchor='start' textLength='34.6' lengthAdjust='spacingAndGlyphs' style=''>Peers' median</text></svg>
<svg class='r' style='left:0;top:0;overflow:visible' width='1' height='1'><text x='477' y='260' font-size='6.0' fill='#202124' font-weight='700' text-anchor='end' textLength='6.5' lengthAdjust='spacingAndGlyphs' style=''>69</text></svg>
<svg class='r' style='left:0;top:0;overflow:visible' width='1' height='1'><text x='393.4' y='269' font-size='6.0' fill='#3c4043' font-weight='400' text-anchor='start' textLength='36.8' lengthAdjust='spacingAndGlyphs' style=''>25th percentile</text></svg>
<svg class='r' style='left:0;top:0;overflow:visible' width='1' height='1'><text x='477' y='269' font-size='6.0' fill='#202124' font-weight='700' text-anchor='end' textLength='6.1' lengthAdjust='spacingAndGlyphs' style=''>28</text></svg>
<div class='r' style='left:386.7px;top:277.2px;width:97.5px;height:0.6px;background:#e8eaed'></div>
<svg class='r' style='left:0;top:0;overflow:visible' width='1' height='1'><text x='393.4' y='290' font-size='6.0' fill='#5f6368' font-weight='400' text-anchor='start' textLength='83.6' lengthAdjust='spacingAndGlyphs' style=''>Tue 13 Jan 2026 vs Mon 24 Nov 2025</text></svg>
<svg class='r' style='left:0;top:0;overflow:visible' width='1' height='1'><text x='393.4' y='300' font-size='5.9' fill='#3c4043' font-weight='400' text-anchor='start' textLength='29.35' lengthAdjust='spacingAndGlyphs' style=''>Active users</text></svg>
<svg class='r' style='left:0;top:0;overflow:visible' width='1' height='1'><text x='451.4' y='300' font-size='6.0' fill='#202124' font-weight='700' text-anchor='end' textLength='13.4' lengthAdjust='spacingAndGlyphs' style=''>5,019</text></svg>
<svg class='r' style='left:457.3px;top:295.6px;' width='3' height='5' viewBox='0 0 3 5'><path d='M1.5 4.6 V1 M0.3 2.2 L1.5 0.6 L2.7 2.2' stroke='#137333' stroke-width='0.9' fill='none'/></svg>
<svg class='r' style='left:0;top:0;overflow:visible' width='1' height='1'><text x='477' y='300' font-size='6.0' fill='#137333' font-weight='700' text-anchor='end' textLength='15.5' lengthAdjust='spacingAndGlyphs' style=''>55.6%</text></svg>
<svg class='r' style='left:0;top:0;overflow:visible' width='1' height='1'><text x='80' y='318' font-size='8.6' fill='#3c4043' font-weight='400' text-anchor='start' textLength='65' lengthAdjust='spacingAndGlyphs' stroke='#3c4043' stroke-width='0.189' style=''>Recently accessed</text></svg>
<div class='r' style='left:79.5px;top:333px;width:526.5px;height:38px;background:#f1f3f4;border-radius:4px'></div>
<svg class='r' style='left:249.5px;top:346.5px;' width='15' height='13' viewBox='0 0 15 13'><circle cx='2' cy='1.2' r='1.2' fill='#a8c7fa'/><rect x='0.6' y='1.6' width='10.8' height='5.6' rx='0.4' fill='none' stroke='#6f7378' stroke-width='0.7'/><rect x='1.2' y='2.2' width='2.4' height='1.6' fill='#a8c7fa'/><path d='M4.2 3.6 L5.2 11 L6.7 9.3 L8.6 12.3 L10 11.5 L8.2 8.6 L10.6 8.3 Z' fill='#f1f3f4' stroke='#3c4043' stroke-width='0.7' stroke-linejoin='round'/></svg>
<svg class='r' style='left:0;top:0;overflow:visible' width='1' height='1'><text x='268.2' y='354' font-size='5.8' fill='#3c4043' font-weight='400' text-anchor='start' textLength='165.5' lengthAdjust='spacingAndGlyphs' style=''>Reports and pages that you've recently visited will appear here.</text></svg>
<svg class='r' style='left:0;top:0;overflow:visible' width='1' height='1'><text x='80' y='397' font-size='8.0' fill='#3c4043' font-weight='400' text-anchor='start' textLength='63.5' lengthAdjust='spacingAndGlyphs' style=''>Suggested for you</text></svg>
<div class='r' style='left:80px;top:399.2px;width:63.5px;height:0.9px;background:repeating-linear-gradient(90deg,#80868b 0 3px,transparent 3px 5px)'></div>
<div class='r' style='left:80px;top:412.5px;width:260px;height:40px;background:#fff;border:0.6px solid #e4e5e8;border-radius:2.5px'></div>
<div class='r' style='left:347px;top:412.5px;width:126px;height:40px;background:#fff;border:0.6px solid #e4e5e8;border-radius:2.5px'></div>
<div class='r' style='left:479.5px;top:412.5px;width:130px;height:40px;background:#fff;border:0.6px solid #e4e5e8;border-radius:2.5px'></div>
<svg class='r' style='left:0;top:0;overflow:visible' width='1' height='1'><text x='90' y='429' font-size='6.0' fill='#3c4043' font-weight='400' text-anchor='start' textLength='33.3' lengthAdjust='spacingAndGlyphs' stroke='#3c4043' stroke-width='0.132' style=''>Active users</text></svg>
<svg class='r' style='left:123.2px;top:426.3px;' width='5' height='3' viewBox='0 0 5 3'><path d='M0.5 0.5 L2.5 2.6 L4.5 0.5 Z' fill='#3c4043'/></svg>
<svg class='r' style='left:0;top:0;overflow:visible' width='1' height='1'><text x='129.75' y='429' font-size='6.0' fill='#3c4043' font-weight='400' text-anchor='start' textLength='38.1' lengthAdjust='spacingAndGlyphs' stroke='#3c4043' stroke-width='0.132' style=''>by Country ID</text></svg>
<svg class='r' style='left:167.7px;top:426.3px;' width='5' height='3' viewBox='0 0 5 3'><path d='M0.5 0.5 L2.5 2.6 L4.5 0.5 Z' fill='#3c4043'/></svg>
<svg class='r' style='left:0;top:0;overflow:visible' width='1' height='1'><text x='356.9' y='429' font-size='6.0' fill='#3c4043' font-weight='400' text-anchor='start' textLength='24.4' lengthAdjust='spacingAndGlyphs' stroke='#3c4043' stroke-width='0.132' style=''>Views by</text></svg>
<div class='r' style='left:357px;top:430.2px;width:16px;height:0.5px;background:repeating-linear-gradient(90deg,#9aa0a6 0 1px,transparent 1px 2px)'></div>
<svg class='r' style='left:0;top:0;overflow:visible' width='1' height='1'><text x='356.9' y='437' font-size='6.0' fill='#3c4043' font-weight='400' text-anchor='start' textLength='59.1' lengthAdjust='spacingAndGlyphs' stroke='#3c4043' stroke-width='0.132' style=''>Page title and scree...</text></svg>
<svg class='r' style='left:0;top:0;overflow:visible' width='1' height='1'><text x='490' y='429' font-size='6.0' fill='#3c4043' font-weight='400' text-anchor='start' textLength='23.5' lengthAdjust='spacingAndGlyphs' stroke='#3c4043' stroke-width='0.132' style=''>Sessions</text></svg>
<svg class='r' style='left:513px;top:426.3px;' width='5' height='3' viewBox='0 0 5 3'><path d='M0.5 0.5 L2.5 2.6 L4.5 0.5 Z' fill='#3c4043'/></svg>
<svg class='r' style='left:0;top:0;overflow:visible' width='1' height='1'><text x='519' y='429' font-size='6.0' fill='#3c4043' font-weight='400' text-anchor='start' textLength='7' lengthAdjust='spacingAndGlyphs' stroke='#3c4043' stroke-width='0.132' style=''>by</text></svg>
<svg class='r' style='left:0;top:0;overflow:visible' width='1' height='1'><text x='490' y='437' font-size='6.0' fill='#3c4043' font-weight='400' text-anchor='start' textLength='55.5' lengthAdjust='spacingAndGlyphs' stroke='#3c4043' stroke-width='0.132' style=''>Session primary ch...</text></svg>
<svg class='r' style='left:548px;top:434.3px;' width='5' height='3' viewBox='0 0 5 3'><path d='M0.5 0.5 L2.5 2.6 L4.5 0.5 Z' fill='#3c4043'/></svg>
<div class='r' style='left:305.5px;top:422.5px;width:24.7px;height:11.3px;background:#fff;border:0.6px solid #e2e3e5;border-radius:6px'></div>
<svg class='r' style='left:309.0px;top:424.5px;' width='8' height='8' viewBox='0 0 8 8'><circle cx='4' cy='4' r='3.2' fill='none' stroke='#188038' stroke-width='1'/><path d='M1.8 6.2 L6.2 1.8' stroke='#188038' stroke-width='0.9'/></svg>
<svg class='r' style='left:321.1px;top:427px;' width='5' height='3' viewBox='0 0 5 3'><path d='M0.5 0.5 L2.5 2.6 L4.5 0.5 Z' fill='#5f6368'/></svg>
<div class='r' style='left:438.1px;top:422.5px;width:24.7px;height:11.3px;background:#fff;border:0.6px solid #e2e3e5;border-radius:6px'></div>
<svg class='r' style='left:441.6px;top:424.5px;' width='8' height='8' viewBox='0 0 8 8'><circle cx='4' cy='4' r='3.2' fill='none' stroke='#188038' stroke-width='1'/><path d='M1.8 6.2 L6.2 1.8' stroke='#188038' stroke-width='0.9'/></svg>
<svg class='r' style='left:453.70000000000005px;top:427px;' width='5' height='3' viewBox='0 0 5 3'><path d='M0.5 0.5 L2.5 2.6 L4.5 0.5 Z' fill='#5f6368'/></svg>
<div class='r' style='left:571.7px;top:422.5px;width:24.7px;height:11.3px;background:#fff;border:0.6px solid #e2e3e5;border-radius:6px'></div>
<svg class='r' style='left:575.2px;top:424.5px;' width='8' height='8' viewBox='0 0 8 8'><circle cx='4' cy='4' r='3.2' fill='none' stroke='#188038' stroke-width='1'/><path d='M1.8 6.2 L6.2 1.8' stroke='#188038' stroke-width='0.9'/></svg>
<svg class='r' style='left:587.3000000000001px;top:427px;' width='5' height='3' viewBox='0 0 5 3'><path d='M0.5 0.5 L2.5 2.6 L4.5 0.5 Z' fill='#5f6368'/></svg>
<div class='r' style='left:602px;top:208px;width:6.5px;height:230px;background:linear-gradient(90deg,rgba(0,0,0,0),rgba(0,0,0,.035) 50%,rgba(0,0,0,.16))'></div>
<div class='r' style='left:606px;top:208.5px;width:194px;height:3.5px;background:linear-gradient(180deg,rgba(0,0,0,0),rgba(0,0,0,.1))'></div>
<div class='r' style='left:608.2px;top:211.8px;width:191.8px;height:226.2px;background:#2f2f2f'></div>
<svg class='r' style='left:0;top:0;overflow:visible' width='1' height='1'><text x='704.5' y='219.4' font-size='5.7' fill='#d6d6d6' font-weight='400' text-anchor='middle' textLength='101' lengthAdjust='spacingAndGlyphs' style=''>Oficialni-Logo-2-Multimediaexpo-cz.png</text></svg>
<svg class='r' style='left:0;top:0;overflow:visible' width='1' height='1'><text x='768' y='219' font-size='6' fill='#bbb' font-weight='400' text-anchor='middle' style=''>&#8211;</text></svg>
<svg class='r' style='left:777.5px;top:213.5px;' width='6' height='6' viewBox='0 0 6 6'><path d='M1 5 L5 1 M3 1 H5 V3 M1 3 V5 H3' stroke='#bbb' stroke-width='0.7' fill='none'/></svg>
<svg class='r' style='left:789px;top:212.5px;' width='8' height='8' viewBox='0 0 8 8'><circle cx='4' cy='4' r='3.4' fill='#7aa35a'/><path d='M2.6 2.6 L5.4 5.4 M5.4 2.6 L2.6 5.4' stroke='#2f2f2f' stroke-width='0.9'/></svg>
<svg class='r' style='left:0;top:0;overflow:visible' width='1' height='1'><text x='612' y='230.2' font-size='5.6' fill='#c8c8c8' font-weight='400' text-anchor='start' style=''>File</text></svg>
<svg class='r' style='left:0;top:0;overflow:visible' width='1' height='1'><text x='627' y='230.2' font-size='5.6' fill='#c8c8c8' font-weight='400' text-anchor='start' style=''>Edit</text></svg>
<svg class='r' style='left:0;top:0;overflow:visible' width='1' height='1'><text x='643' y='230.2' font-size='5.6' fill='#c8c8c8' font-weight='400' text-anchor='start' style=''>View</text></svg>
<svg class='r' style='left:0;top:0;overflow:visible' width='1' height='1'><text x='661' y='230.2' font-size='5.6' fill='#c8c8c8' font-weight='400' text-anchor='start' style=''>Go</text></svg>
<svg class='r' style='left:0;top:0;overflow:visible' width='1' height='1'><text x='676' y='230.2' font-size='5.6' fill='#c8c8c8' font-weight='400' text-anchor='start' style=''>Help</text></svg>
<svg class='r' style='left:614.5px;top:238px;' width='6' height='8' viewBox='0 0 6 8'><path d='M4.5 0.8 L1.5 4 L4.5 7.2' stroke='#ddd' stroke-width='0.9' fill='none'/></svg>
<svg class='r' style='left:630px;top:238px;' width='6' height='8' viewBox='0 0 6 8'><path d='M1.5 0.8 L4.5 4 L1.5 7.2' stroke='#ddd' stroke-width='0.9' fill='none'/></svg>
<div class='r' style='left:646px;top:238px;width:0.7px;height:8px;background:#555'></div>
<svg class='r' style='left:655.0px;top:238.5px;' width='7' height='7' viewBox='0 0 7 7'><rect x='0.5' y='0.5' width='6' height='6' rx='1.3' fill='#ddd'/><rect x='1.8' y='3' width='3.4' height='1' fill='#2f2f2f'/></svg>
<svg class='r' style='left:670.0px;top:238.5px;' width='7' height='7' viewBox='0 0 7 7'><rect x='0.5' y='0.5' width='6' height='6' rx='1.3' fill='#ddd'/><rect x='1.8' y='3' width='3.4' height='1' fill='#2f2f2f'/><rect x='3' y='1.8' width='1' height='3.4' fill='#2f2f2f'/></svg>
<svg class='r' style='left:686.0px;top:238.5px;' width='7' height='7' viewBox='0 0 7 7'><rect x='0.5' y='0.5' width='6' height='6' rx='1.3' fill='#ddd'/><rect x='3' y='1.6' width='1' height='3.8' fill='#2f2f2f'/><rect x='2.2' y='1.6' width='1' height='0.8' fill='#2f2f2f'/></svg>
<div class='r' style='left:698px;top:235.9px;width:14px;height:12.9px;background:#88a86c;border-radius:1px'></div>
<svg class='r' style='left:701.5px;top:238.8px;' width='7' height='7' viewBox='0 0 7 7'><rect x='0.4' y='0.4' width='6.2' height='6.2' rx='1.3' fill='#eef2ea'/><path d='M2.6 1.2 V5.8 M4.4 1.2 V5.8 M1.2 3.5 H5.8' stroke='#88a86c' stroke-width='0.6'/></svg>
<div class='r' style='left:718.4px;top:238px;width:0.6px;height:8px;background:#555'></div>
<svg class='r' style='left:726.5px;top:239px;' width='8' height='7' viewBox='0 0 8 7'><path d='M1.8 5 V3.8 A2.6 2.6 0 0 1 7 3.8 V5.2' stroke='#ddd' stroke-width='0.9' fill='none'/><path d='M0.4 3.8 L1.8 5.6 L3.2 3.8' stroke='#ddd' stroke-width='0.9' fill='none'/></svg>
<svg class='r' style='left:742.5px;top:239px;' width='8' height='7' viewBox='0 0 8 7'><path d='M6.2 5 V3.8 A2.6 2.6 0 0 0 1 3.8 V5.2' stroke='#ddd' stroke-width='0.9' fill='none'/><path d='M7.6 3.8 L6.2 5.6 L4.8 3.8' stroke='#ddd' stroke-width='0.9' fill='none'/></svg>
<div class='r' style='left:759.4px;top:238px;width:0.6px;height:8px;background:#555'></div>
<svg class='r' style='left:767.5px;top:238.5px;' width='9' height='8' viewBox='0 0 9 8'><path d='M1 7 L3.4 4.6 M8 0.8 L5.6 3.2 M1 4.8 V7 H3.2 M5.8 0.8 H8 V3' stroke='#ddd' stroke-width='0.9' fill='none'/></svg>
<svg class='r' style='left:783.5px;top:238.5px;' width='9' height='8' viewBox='0 0 9 8'><path d='M0.8 2.2 H7.8 M4.3 0.6 V7.4 M1.6 2.2 V5.4 H7 V2.2 M1.6 5.4 L0.8 7.2 M7 5.4 L7.8 7.2' stroke='#ddd' stroke-width='0.85' fill='none'/></svg>
<div class='r' style='left:608.5px;top:251.5px;width:191.5px;height:172.5px;background:#000'></div>
<div class='r' style='left:618px;top:252px;width:172px;height:171.5px;background:#fff'></div>
<svg class='r' style='left:0;top:0' width='800' height='450' viewBox='0 0 800 450'>
<defs>
<linearGradient id='db' x1='0' y1='0' x2='0' y2='1'><stop offset='0' stop-color='#1a6fbc'/><stop offset='1' stop-color='#173f78'/></linearGradient>
<linearGradient id='lbL' x1='0' y1='0' x2='0' y2='1'><stop offset='0' stop-color='#1c9ad8'/><stop offset='1' stop-color='#2a78c2'/></linearGradient>
<linearGradient id='lbR' x1='0' y1='0' x2='0' y2='1'><stop offset='0' stop-color='#3fb6e8'/><stop offset='1' stop-color='#2296d6'/></linearGradient>
<radialGradient id='gl' cx='0.55' cy='0.45' r='0.6'><stop offset='0' stop-color='#ffffff'/><stop offset='0.6' stop-color='#f0f0f0'/><stop offset='1' stop-color='#d2d2d2'/></radialGradient>
<radialGradient id='or' gradientUnits='userSpaceOnUse' cx='300' cy='220' r='260'><stop offset='0' stop-color='#f9b81f'/><stop offset='0.55' stop-color='#f39a1c'/><stop offset='1' stop-color='#e9761b'/></radialGradient>
<radialGradient id='sh' cx='0.5' cy='0.5' r='0.5'><stop offset='0' stop-color='#cfcfcf'/><stop offset='1' stop-color='#ffffff' stop-opacity='0'/></radialGradient>
</defs>
<path d='M628.4 276.8 L704 257.8 L780.5 276.8 L780.5 370.7 L768.5 364.9 L768.5 283.6 L704 262.4 L640 283.6 L640 364.9 L628.4 370.7 Z' fill='url(#db)'/>
<path d='M646 287 L704 269.3 L704 352 L646 377.6 Z' fill='url(#lbL)'/>
<path d='M762 287 L704 269.3 L704 352 L762 377.6 Z' fill='url(#lbR)'/>
<ellipse cx='704' cy='377' rx='38' ry='7' fill='url(#sh)'/>
<circle cx='704.4' cy='324' r='42.5' fill='url(#gl)'/>
<g transform='translate(660,280) scale(0.2)' fill='url(#or)' fill-rule='evenodd'>
<path d='M25 186 L22 161 L30.6 139 L44.5 111 L61 89 L83.4 66.7 L97 55.6 L119.5 52.8 L139 64 L155.7 58.4 L172 52.8 L196 50 L210 62 L206 84 L204 104 L214 128 L194.6 139 L166.8 147 L139 161 L116.8 175 L97.3 189 L91.7 205.7 L89 219.6 L77.8 205.7 L61 194.6 L47.3 191.8 L39 197.4 L33.4 191.8 Z M141.8 94.5 L166.8 89 L186.3 100 L178 128 L155.7 130.7 L141.8 116.8 Z M105.6 130.7 L128 128 L136 150 L119.5 158.5 L105.6 150 Z'/>
<path d='M27.8 200 L38.9 222 L55.6 244.5 L72 258.4 L83.4 258.4 L111 264 L133.4 278 L150 291.7 L166.8 305.6 L183.5 314 L205.7 322.3 L233.5 330.7 L239 339 L228 355.7 L216.8 366.8 L205.7 383.5 L194.6 400 L183.5 416.8 L186.3 428 L166.8 416.8 L150 400 L133.4 378 L122.3 361 L94.5 339 L72 322.3 L64 300 L72 278 L55.6 255.6 L33.4 227.8 L25 205.6 Z'/>
<path d='M222 53 L241.5 44.5 L261 47 L272 61 L275 78 L261 94.5 L244.5 103 L233.5 89 L230.5 66.5 Z'/>
<path d='M311 50 L330 58 L350 83.5 L383.5 97 L398 118 L405.5 133.5 L414 155.5 L392 158 L368 150 L350 156 L333.5 150 L326 130 L322 111 L314 80 Z'/>
<path d='M322 206 C330 182 350 168 384 162 L424 152 C434 190 434 240 418 290 C408 320 392 348 376 374 L362 372 L366 340 L356 304 L342 272 L326 242 L320 222 Z'/>
<path d='M280 80 L290 82 L288 92 L278 90 Z'/>
</g>
</svg>
<svg class='r' style='left:0;top:0;overflow:visible' width='1' height='1'><text x='630.6' y='399' font-size='17.4' fill='#1a1a1a' font-weight='400' text-anchor='start' letter-spacing='0' style='letter-spacing:0px'>Multimediaexpo.cz</text></svg>
<div class='r' style='left:630.5px;top:400.6px;width:144px;height:1.1px;background:#8a8a8a'></div>
<svg class='r' style='left:0;top:0;overflow:visible' width='1' height='1'><text x='638' y='416.4' font-size='12.6' fill='#1a1a1a' font-weight='400' text-anchor='start' style=''>Otevřená encyklopedie</text></svg>
<div class='r' style='left:608.5px;top:424px;width:191.5px;height:14px;background:#333333'></div>
<svg class='r' style='left:0;top:0;overflow:visible' width='1' height='1'><text x='614' y='434' font-size='5.6' fill='#c8c8c8' font-weight='400' text-anchor='start' textLength='88' lengthAdjust='spacingAndGlyphs' style=''>1200 × 1200 pixels  142.9 kB   34%</text></svg>
<svg class='r' style='left:0;top:0;overflow:visible' width='1' height='1'><text x='780' y='433.6' font-size='5.3' fill='#c8c8c8' font-weight='400' text-anchor='end' style=''>4 / 6</text></svg>
<div class='r' style='left:0px;top:438px;width:800px;height:12px;background:#262626'></div>
<svg class='r' style='left:1.5px;top:438.5px;' width='11' height='11' viewBox='0 0 11 11'><circle cx='5.5' cy='5.5' r='4.6' fill='none' stroke='#ccc' stroke-width='0.9'/><path d='M3.5 3.5 V7.5 H7.5 V3.5 M5.5 3.5 V7.5' stroke='#ccc' stroke-width='0.8' fill='none'/></svg>
<div class='r' style='left:15.5px;top:440.5px;width:7px;height:6.5px;background:#e8e8e8;border-radius:1px'></div>
<div class='r' style='left:25px;top:440px;width:9px;height:8.5px;background:#7bb05a'></div>
<div class='r' style='left:25px;top:446.5px;width:9px;height:2px;background:#5e8f44'></div>
<svg class='r' style='left:39.5px;top:439.5px;' width='9' height='9' viewBox='0 0 9 9'><rect x='0' y='0' width='9' height='9' rx='2' fill='#e5682b'/><circle cx='4.5' cy='4.7' r='2.4' fill='none' stroke='#fff' stroke-width='1.1'/></svg>
<div class='r' style='left:51.5px;top:439.5px;width:8px;height:9px;background:#111;border:0.6px solid #444;border-radius:1px'></div>
<svg class='r' style='left:0;top:0;overflow:visible' width='1' height='1'><text x='53' y='443.5' font-size='4' fill='#ddd' font-weight='400' text-anchor='start' style=''>&gt;_</text></svg>
<svg class='r' style='left:61.5px;top:440px;' width='10' height='8.5' viewBox='0 0 10 8.5'><path d='M0.5 1 H4 L5 2 H9.5 V8.5 H0.5 Z' fill='#7bb05a'/></svg>
<svg class='r' style='left:74px;top:439.5px;' width='3' height='9' viewBox='0 0 3 9'><rect x='0.8' y='0.8' width='1.4' height='1.4' fill='#aaa'/><rect x='0.8' y='3.8' width='1.4' height='1.4' fill='#aaa'/><rect x='0.8' y='6.8' width='1.4' height='1.4' fill='#aaa'/></svg>
<svg class='r' style='left:79px;top:440px;' width='7' height='7.5' viewBox='0 0 7 7.5'><rect x='0' y='0' width='7' height='7.5' rx='1.5' fill='#e5682b'/><circle cx='3.5' cy='3.9' r='1.8' fill='none' stroke='#fff' stroke-width='0.9'/></svg>
<svg class='r' style='left:0;top:0;overflow:visible' width='1' height='1'><text x='88' y='446.3' font-size='5.5' fill='#c8c8c8' font-weight='400' text-anchor='start' style=''>Analytics | Home — ...</text></svg>
<svg class='r' style='left:147.5px;top:440.5px;' width='8' height='7' viewBox='0 0 8 7'><path d='M0.5 1 H3 L4 2 H7.5 V6.5 H0.5 Z' fill='#7bb05a'/></svg>
<svg class='r' style='left:0;top:0;overflow:visible' width='1' height='1'><text x='158' y='446.3' font-size='5.5' fill='#c8c8c8' font-weight='400' text-anchor='start' style=''>ALLGIGAS</text></svg>
<div class='r' style='left:215px;top:438px;width:69.5px;height:12px;background:#8aa56f'></div>
<svg class='r' style='left:218px;top:440px;' width='7' height='7.5' viewBox='0 0 7 7.5'><rect x='0' y='0' width='7' height='7.5' fill='#d8e6f0'/><circle cx='3.5' cy='3.2' r='1.6' fill='#e9b48a'/><rect x='1' y='5' width='5' height='2.5' fill='#6a8fb5'/></svg>
<svg class='r' style='left:0;top:0;overflow:visible' width='1' height='1'><text x='228' y='446.3' font-size='5.5' fill='#eef3e8' font-weight='400' text-anchor='start' style=''>Oficialni-Logo-2-Mul...</text></svg>
<svg class='r' style='left:630px;top:440px;' width='3' height='8' viewBox='0 0 3 8'><rect x='0.8' y='0.5' width='1.4' height='1.6' fill='#ccc'/><rect x='0.8' y='3.2' width='1.4' height='1.6' fill='#ccc'/><rect x='0.8' y='5.9' width='1.4' height='1.6' fill='#ccc'/></svg>
<svg class='r' style='left:0;top:0;overflow:visible' width='1' height='1'><text x='635.5' y='446' font-size='4.5' fill='#bbb' font-weight='400' text-anchor='start' style=''>cs</text></svg>
<svg class='r' style='left:647.5px;top:440px;' width='8' height='8' viewBox='0 0 8 8'><rect x='0.7' y='1' width='5.6' height='6.5' fill='none' stroke='#ddd' stroke-width='0.9'/><rect x='2.3' y='0.3' width='2.4' height='1.6' fill='#ddd'/><path d='M3.5 3 V6' stroke='#ddd' stroke-width='0.8'/></svg>
<svg class='r' style='left:661.5px;top:440px;' width='8' height='8' viewBox='0 0 8 8'><path d='M3.5 0.5 L6.8 1.6 V4 C6.8 6 5 7.2 3.5 7.8 C2 7.2 0.2 6 0.2 4 V1.6 Z' fill='none' stroke='#ddd' stroke-width='0.9'/><path d='M2 3 L3.5 5 L5 3' stroke='#ddd' stroke-width='0.7' fill='none'/></svg>
<svg class='r' style='left:676.5px;top:440px;' width='8' height='8' viewBox='0 0 8 8'><rect x='0.6' y='0.8' width='6' height='6.5' rx='0.6' fill='none' stroke='#ddd' stroke-width='1'/><rect x='0.6' y='0.8' width='6' height='1.4' fill='#ddd'/></svg>
<svg class='r' style='left:692px;top:440px;' width='8' height='8' viewBox='0 0 8 8'><path d='M0.5 2.8 H2 L4 1 V7 L2 5.2 H0.5 Z' fill='#ddd'/><path d='M5 2.6 C5.8 3.3 5.8 4.7 5 5.4 M6 1.6 C7.3 2.8 7.3 5.2 6 6.4' stroke='#ddd' stroke-width='0.7' fill='none'/></svg>
<svg class='r' style='left:707px;top:440px;' width='8' height='8' viewBox='0 0 8 8'><path d='M0.5 2.8 H2 L4 1 V7 L2 5.2 H0.5 Z' fill='#ddd'/><path d='M5 2.6 C5.8 3.3 5.8 4.7 5 5.4 M6 1.6 C7.3 2.8 7.3 5.2 6 6.4' stroke='#ddd' stroke-width='0.7' fill='none'/></svg>
<svg class='r' style='left:721.5px;top:440px;' width='8' height='8' viewBox='0 0 8 8'><rect x='0.6' y='0.8' width='6' height='6.5' rx='0.6' fill='none' stroke='#ddd' stroke-width='1'/><rect x='0.6' y='0.8' width='6' height='1.4' fill='#ddd'/></svg>
<svg class='r' style='left:0;top:0;overflow:visible' width='1' height='1'><text x='737' y='446.2' font-size='5.5' fill='#d0d0d0' font-weight='400' text-anchor='start' textLength='44.5' lengthAdjust='spacingAndGlyphs' style=''>Thu Jan 15, 16:10</text></svg>
<svg class='r' style='left:784.5px;top:441px;' width='6' height='5' viewBox='0 0 6 5'><path d='M0.5 4 L3 1 L5.5 4 Z' fill='#ddd'/></svg>
<svg class='r' style='left:791.5px;top:440px;' width='8' height='8' viewBox='0 0 8 8'><circle cx='4' cy='4' r='3.2' fill='none' stroke='#bbb' stroke-width='0.9'/><path d='M2.5 5.5 L5.5 2.5' stroke='#bbb' stroke-width='0.8'/></svg>
</body></html>
